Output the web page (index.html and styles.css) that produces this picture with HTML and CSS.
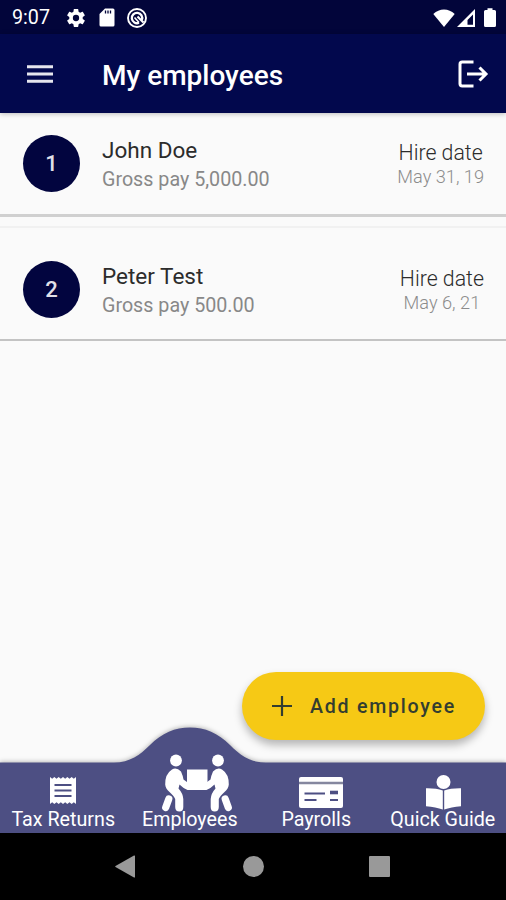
FILE: index.html
```html
<!DOCTYPE html>
<html lang="en">
<head>
<meta charset="utf-8">
<title>My employees</title>
<link rel="stylesheet" href="styles.css">
</head>
<body>
<div class="app">
  <div class="status">
    <span class="clock">9:07</span>
    <svg class="gear" viewBox="2 2 20 20"><path fill="#fff" fill-rule="evenodd" d="M19.43 12.98c.04-.32.07-.64.07-.98s-.03-.66-.07-.98l2.11-1.65c.19-.15.24-.42.12-.64l-2-3.46c-.12-.22-.39-.3-.61-.22l-2.49 1c-.52-.4-1.08-.73-1.69-.98l-.38-2.65C14.46 2.18 14.25 2 14 2h-4c-.25 0-.46.18-.49.42l-.38 2.65c-.61.25-1.17.59-1.69.98l-2.49-1c-.23-.09-.49 0-.61.22l-2 3.46c-.13.22-.07.49.12.64l2.11 1.65c-.04.32-.07.65-.07.98s.03.66.07.98l-2.11 1.65c-.19.15-.24.42-.12.64l2 3.46c.12.22.39.3.61.22l2.49-1c.52.4 1.08.73 1.69.98l.38 2.65c.03.24.24.42.49.42h4c.25 0 .46-.18.49-.42l.38-2.65c.61-.25 1.17-.59 1.69-.98l2.49 1c.23.09.49 0 .61-.22l2-3.46c.12-.22.07-.49-.12-.64l-2.11-1.65zM12 15.500a3.500 3.500 0 1 1 0-7 3.500 3.500 0 0 1 0 7z"/></svg>
    <svg class="sd" viewBox="0 0 16 19"><path fill="#fff" d="M6 .5h8q1.500 0 1.500 1.500v15q0 1.500-1.500 1.500H2Q.5 18.500 .5 17V6z"/><path stroke="#02053a" stroke-width="1.300" d="M6.500 2.500v3M9 2.500v3M11.500 2.500v3"/></svg>
    <svg class="disc" viewBox="0 0 20 20" fill="none" stroke="#fff"><circle cx="10" cy="10" r="9" stroke-width="1.900"/><path stroke-width="2.300" d="M12 14.800A5.200 5.200 0 1 1 14.800 12"/><path stroke-width="2.200" d="M10.500 8.500l6 6"/><path stroke-width="1.600" d="M7.500 9.500l4.500 5"/></svg>
    <span class="grow"></span>
    <svg class="wifi" viewBox="0 0 22 18"><path fill="#fff" d="M11 18L.3 5Q5 .5 11 .5T21.700 5z"/></svg>
    <svg class="signal" viewBox="0 0 18 18"><path fill="#fff" fill-rule="evenodd" d="M0 18L18 0V18zM10.500 15.800H16V5.500L10.500 11z"/></svg>
    <svg class="battery" viewBox="0 0 12 19"><path fill="#fff" d="M3.500 2V.3h5V2h2Q12 2 12 3.500v14q0 1.500-1.500 1.500h-9Q0 19 0 17.500v-14Q0 2 1.500 2z"/></svg>
  </div>
  <header class="bar">
    <svg class="menu" viewBox="0 0 26 18"><path stroke="#e6e6ee" stroke-width="3" d="M0 1.700h26M0 9h26M0 16.300h26"/></svg>
    <h1>My employees</h1>
    <svg class="logout" viewBox="0 0 30 28" fill="none" stroke="#fff" stroke-width="3"><path d="M15.500 2H4.200Q2 2 2 4.200v19.600Q2 26 4.200 26h11.300M9 14h18M21.500 7.500L28 14l-6.500 6.500"/></svg>
  </header>
  <main class="list">
    <section class="row first">
      <div class="num">1</div>
      <div class="who"><div class="name">John Doe</div><div class="pay">Gross pay 5,000.00</div></div>
      <div class="hire"><div class="label">Hire date</div><div class="date">May 31, 19</div></div>
    </section>
    <section class="row second">
      <div class="num">2</div>
      <div class="who"><div class="name">Peter Test</div><div class="pay">Gross pay 500.00</div></div>
      <div class="hire"><div class="label">Hire date</div><div class="date">May 6, 21</div></div>
    </section>
    <button class="fab"><svg viewBox="0 0 20 20"><path stroke="#333d30" stroke-width="2.200" d="M10 0v20M0 10h20"/></svg><span>Add employee</span></button>
  </main>
  <nav class="tabs">
    <svg class="hump" viewBox="0 0 506 108"><path fill="#4d4f83" d="M0 37.500H114C130 37.500 140 30 150 20C162 8 175 2.500 190 2.500S218 8 230 20C240 30 250 37.500 266 37.500H506V108H0z"/></svg>
    <a class="tab"><svg class="i-tax" viewBox="0 0 26 27"><path fill="#fff" d="M0 0l2.170 1.800L4.330 0 6.500 1.800 8.670 0l2.160 1.800L13 0l2.170 1.800L17.330 0l2.170 1.800L21.670 0l2.160 1.800L26 0v27l-2.170-1.800L21.670 27l-2.170-1.800L17.330 27l-2.160-1.800L13 27l-2.170-1.800L8.670 27 6.500 25.200 4.330 27l-2.160-1.800L0 27z"/><path stroke="#4d4f83" stroke-width="2" d="M4.500 8h17M4.500 13.500h17M4.500 19h17"/></svg><span>Tax Returns</span></a>
    <a class="tab"><svg class="i-emp" viewBox="0 0 72 58"><g id="carrier" fill="#fff"><circle cx="15" cy="6.500" r="5.900"/><path d="M11 15.500Q15.500 13 20 17.500Q22 22 22.500 25.500L28 29.500H36V36H26.500Q22.500 34.500 18.500 30.500L17.500 34.500Q22 39.500 22.300 45V53Q22.300 57.500 18.300 57.500T14.200 53V45Q13 42 8.500 38Q4.500 34.500 4.200 30.500Q4 20 11 15.500z"/><path stroke="#fff" stroke-width="7.200" stroke-linecap="round" d="M7.800 45L4.700 53.500"/></g><use href="#carrier" transform="matrix(-1 0 0 1 72 0)"/><path fill="#fff" d="M26 15.500h20.500V33H26z"/></svg><span>Employees</span></a>
    <a class="tab"><svg class="i-pay" viewBox="0 0 44 31"><rect width="44" height="31" rx="2" fill="#fff"/><path stroke="#85879f" stroke-width="2.600" d="M0 6h44"/><g stroke="#4d4f83" fill="none"><path stroke-width="2" d="M5.500 16.500h20.500M5.500 23h12M31 23h8"/><path stroke-width="3.600" d="M31 15.500h8"/></g></svg><span>Payrolls</span></a>
    <a class="tab"><svg class="i-book" viewBox="0 0 35 35"><circle cx="17.500" cy="7" r="7" fill="#fff"/><path fill="#fff" d="M0 13.200Q10 13 16.800 15.500V34.500Q10 32 0 31.200zM35 13.200Q25 13 18.200 15.500V34.500Q25 32 35 31.200z"/></svg><span>Quick Guide</span></a>
  </nav>
  <footer class="system">
    <svg viewBox="0 0 20 23"><path fill="#999" d="M19 .5q1-.4 1 .5v21q0 .9-1 .5L.5 12q-.7-.5 0-1z"/></svg>
    <svg class="home" viewBox="0 0 21 21"><circle cx="10.500" cy="10.500" r="10.500" fill="#999"/></svg>
    <svg class="recent" viewBox="0 0 21 21"><rect width="21" height="21" rx="1" fill="#999"/></svg>
  </footer>
</div>
</body>
</html>
```
FILE: styles.css
```css
* { box-sizing: border-box; }
body { margin: 0; font-family: Roboto, "Liberation Sans", sans-serif; }
svg { display: block; flex: none; overflow: visible; }
.app { width: 506px; height: 900px; display: flex; flex-direction: column; overflow: hidden; background: #fafafa; }

.status { height: 34px; flex: none; display: flex; align-items: center; padding: 1px 10px 0 12px; background: #02053a; color: #fff; }
.clock { width: 55px; font-size: 19.7px; line-height: 34px; white-space: nowrap; }
.gear { width: 18px; height: 18px; }
.sd { width: 16px; height: 19px; margin-left: 14px; }
.disc { width: 20px; height: 20px; margin-left: 12px; }
.grow { flex: 1; }
.wifi { width: 22px; height: 18px; margin-right: 2px; }
.signal { width: 18px; height: 18px; margin-right: 9px; }
.battery { width: 12px; height: 19px; }
.clock { padding-top: 1px; }

.bar { height: 79px; flex: none; display: flex; align-items: center; padding: 0 18px 0 27px; background: #02084d; color: #fff; position: relative; z-index: 1; box-shadow: 0 1px 5px rgba(0, 0, 0, .25); }
.menu { width: 26px; height: 18px; }
.logout { width: 30px; height: 28px; }
h1 { flex: 1; margin: 4px 0 0 49px; font-size: 28px; font-weight: 500; line-height: 32px; white-space: nowrap; }

.list { flex: 1; position: relative; }
.row { display: flex; padding: 0 22px 0 23px; }
.first { height: 104px; padding-top: 22px; border-bottom: 3px solid #d0d0d0; }
.second { height: 115px; margin-top: 9px; padding-top: 33px; border-top: 2px solid #f1f1f1; border-bottom: 2px solid #c3c3c3; }
.num { width: 57px; height: 57px; flex: none; border-radius: 50%; background: #02053f; color: #e0e0e8; font-size: 22px; font-weight: 500; line-height: 57px; text-align: center; }
.who { flex: 1; margin-left: 22px; white-space: nowrap; }
.name { font-size: 22.5px; line-height: 29px; color: #2c2c2c; }
.pay { font-size: 19.7px; line-height: 29px; color: #888; }
.first .who { padding-top: 1px; }
.second .who { padding-top: 1px; }
.hire { text-align: center; padding-top: 6px; white-space: nowrap; }
.label { font-size: 21.3px; font-weight: 300; line-height: 24px; color: #2c2c2c; }
.date { font-size: 18.2px; font-weight: 300; line-height: 23px; color: #8c8c8c; }

.fab { position: absolute; right: 21px; bottom: 22px; width: 243px; height: 68px; border: 0; border-radius: 34px; display: flex; align-items: center; padding: 0 0 0 30px; background: #f6c915; color: #333d30; font: 500 19.6px/68px Roboto, sans-serif; letter-spacing: 1.75px; box-shadow: 0 5px 9px rgba(0, 0, 0, .28); z-index: 2; white-space: nowrap; }
.fab svg { width: 20px; height: 20px; margin-right: 18px; }
.fab span { padding-top: 2px; }

.tabs { height: 71px; flex: none; position: relative; display: grid; grid-template: 71px / repeat(4, 1fr); color: #fff; font-size: 19.7px; }
.hump { position: absolute; left: 0; bottom: 0; width: 506px; height: 108px; filter: drop-shadow(0 -1px 2px rgba(0, 0, 0, .25)); }
.tab { position: relative; display: flex; flex-direction: column; align-items: center; justify-content: flex-end; white-space: nowrap; }
.tab span { line-height: 24px; margin-bottom: 1px; }
.i-tax { width: 26px; height: 27px; margin-bottom: 4px; }
.i-emp { width: 72px; height: 58px; margin: 0 0 -4px 15px; }
.i-pay { width: 44px; height: 31px; margin: 0 0 0 10px; }
.i-book { width: 35px; height: 35px; margin: 0 0 -2px 1px; }

.system { height: 67px; flex: none; display: flex; align-items: center; padding-left: 115px; background: #000; }
.system svg { width: 20px; height: 23px; }
.system .home { width: 21px; height: 21px; margin-left: 108px; }
.system .recent { width: 21px; height: 21px; margin-left: 105px; }
```
